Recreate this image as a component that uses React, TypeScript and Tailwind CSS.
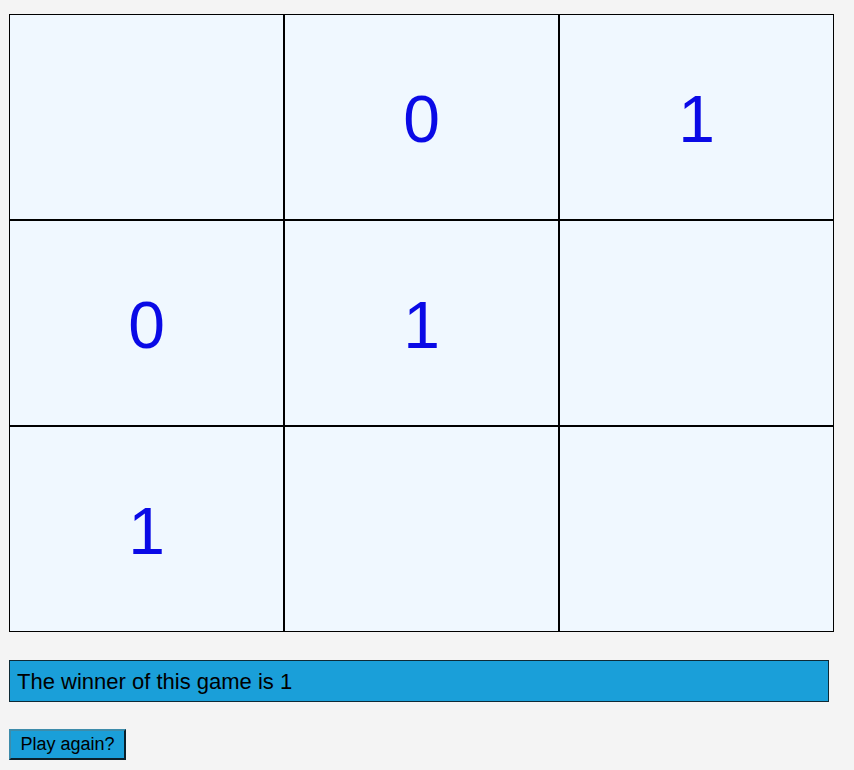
import React from 'react';

const board: (string | null)[] = [null, '0', '1', '0', '1', null, '1', null, null];

export default function App() {
  return (
    <div className="min-h-[770px] bg-[#f4f4f4] px-[9px] pt-[14px] font-['Liberation_Sans',Arial,sans-serif]">
      <div className="grid w-[825px] grid-cols-3">
        {board.map((v, i) => (
          <div
            key={i}
            className="flex h-[206px] items-center justify-center border border-black bg-[#f0f8ff] pt-[4px] text-[66px] leading-none text-[#0a0ae6]"
          >
            {v}
          </div>
        ))}
      </div>
      <div className="mt-[28px] flex h-[42px] w-[820px] items-center border border-[#0e2a36] bg-[#1a9fd9] px-[7px] text-[22px] text-black">
        The winner of this game is 1
      </div>
      <button className="mt-[27px] h-[31px] w-[117px] border-2 border-t-[#3d8cab] border-l-[#3d8cab] border-b-[#0b1f28] border-r-[#0b1f28] bg-[#1a9fd9] text-[18px] text-black">
        Play again?
      </button>
    </div>
  );
}
